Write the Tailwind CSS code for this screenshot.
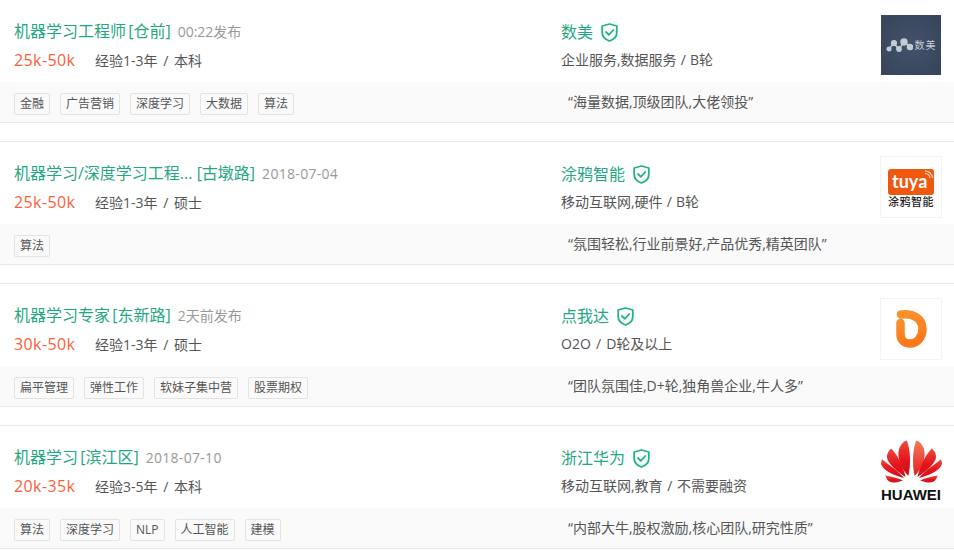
<!DOCTYPE html>
<html><head><meta charset="utf-8"><script src="https://cdn.jsdelivr.net/npm/@tailwindcss/browser@4"></script></head>
<body class="bg-white overflow-hidden">
<div class="w-[954px] h-[550px] overflow-hidden font-['Open_Sans','Noto_Sans_CJK_SC',sans-serif] text-[#555]">
<div class="-mt-px flex flex-col gap-[18px]">

<section class="h-[124px] border-y border-[#e8e8e8] flex flex-col">
 <div class="h-[82px] flex">
  <div class="w-[561px] pl-[14px] pt-[20px]">
   <div class="flex items-center h-[22px] gap-[7px]"><span class="text-[16px] leading-[22px] text-[#1fa883] [word-spacing:-2px]">机器学习工程师 [仓前]</span><span class="text-[14px] text-[#999]">00:22发布</span></div>
   <div class="flex items-center h-[22px] mt-[7px]"><span class="w-[81px] text-[16px] tracking-[0.4px] text-[#fd5f39]">25k-50k</span><span class="text-[14px] mt-[1px] [word-spacing:2px]">经验1-3年 / 本科</span></div>
  </div>
  <div class="w-[320px] pt-[21px]">
   <div class="flex items-center h-[22px] gap-[8px]"><span class="text-[16px] text-[#1fa883]">数美</span>
    <svg class="w-[17px] h-[19px]" viewBox="0 0 17 19" fill="none" stroke="#1fb389" stroke-width="1.8"><path d="M8.5 1 L15.8 3 V9.5 C15.8 14 12 16.8 8.5 18 C5 16.8 1.2 14 1.2 9.5 V3 Z" stroke-linejoin="round"/><path d="M5 9 L7.8 11.8 L12.3 7" stroke-linecap="round" stroke-linejoin="round"/></svg></div>
   <div class="text-[14px] leading-[22px] mt-[6px] [word-spacing:0.5px]">企业服务,数据服务 / B轮</div>
  </div>
  <div class="pt-[15px]"><div class="w-[60px] h-[60px] bg-[radial-gradient(circle,#42526a,#37445a)] flex items-center justify-center gap-[2px]">
   <svg class="w-[27px] h-[16px]" viewBox="0 0 27 16" fill="#c3cbd5" stroke="#c3cbd5" stroke-width="1.4"><path d="M3 12 L8 6 L13 13 L18 4 L24 10" fill="none"/><circle cx="3" cy="12" r="1.8"/><circle cx="8" cy="6" r="2.4"/><circle cx="13" cy="12" r="2.2"/><circle cx="18" cy="5" r="3"/><circle cx="24" cy="10" r="2.6"/></svg>
   <span class="text-[10px] leading-none text-[#c3cbd5] tracking-[1px]">数美</span>
  </div></div>
 </div>
 <div class="flex-1 bg-[#fafafa] flex items-center">
  <div class="w-[568px] pl-[14px] mt-[4px] flex gap-[10px] text-[12px]">
   <span class="h-[22px] leading-[20px] px-[5px] border border-[#e3e3e3] rounded-[2px]">金融</span>
   <span class="h-[22px] leading-[20px] px-[5px] border border-[#e3e3e3] rounded-[2px]">广告营销</span>
   <span class="h-[22px] leading-[20px] px-[5px] border border-[#e3e3e3] rounded-[2px]">深度学习</span>
   <span class="h-[22px] leading-[20px] px-[5px] border border-[#e3e3e3] rounded-[2px]">大数据</span>
   <span class="h-[22px] leading-[20px] px-[5px] border border-[#e3e3e3] rounded-[2px]">算法</span>
  </div>
  <div class="text-[14px] -mt-[2px]">“海量数据,顶级团队,大佬领投”</div>
 </div>
</section>

<section class="h-[124px] border-y border-[#e8e8e8] flex flex-col">
 <div class="h-[82px] flex">
  <div class="w-[561px] pl-[14px] pt-[20px]">
   <div class="flex items-center h-[22px] gap-[7px]"><span class="text-[16px] leading-[22px] text-[#1fa883]">机器学习/深度学习工程... [古墩路]</span><span class="text-[14px] tracking-[0.3px] text-[#999]">2018-07-04</span></div>
   <div class="flex items-center h-[22px] mt-[7px]"><span class="w-[81px] text-[16px] tracking-[0.4px] text-[#fd5f39]">25k-50k</span><span class="text-[14px] mt-[1px] [word-spacing:2px]">经验1-3年 / 硕士</span></div>
  </div>
  <div class="w-[319px] pt-[21px]">
   <div class="flex items-center h-[22px] gap-[8px]"><span class="text-[16px] text-[#1fa883]">涂鸦智能</span>
    <svg class="w-[17px] h-[19px]" viewBox="0 0 17 19" fill="none" stroke="#1fb389" stroke-width="1.8"><path d="M8.5 1 L15.8 3 V9.5 C15.8 14 12 16.8 8.5 18 C5 16.8 1.2 14 1.2 9.5 V3 Z" stroke-linejoin="round"/><path d="M5 9 L7.8 11.8 L12.3 7" stroke-linecap="round" stroke-linejoin="round"/></svg></div>
   <div class="text-[14px] leading-[22px] mt-[6px] [word-spacing:0.5px]">移动互联网,硬件 / B轮</div>
  </div>
  <div class="pt-[14px]"><div class="w-[62px] h-[62px] border border-[#f3f3f3] flex flex-col items-center pt-[12px]">
   <div class="relative w-[46px] h-[26px] bg-[#f0570f] rounded-[3px] flex items-center pl-[4px]"><span class="text-[18px] leading-none font-bold text-white font-['Lato',sans-serif] -mt-[3px]">tuya</span>
    <svg class="absolute right-[1px] top-[1px] w-[9px] h-[9px]" viewBox="0 0 9 9" fill="none" stroke="#ffd9c4" stroke-width="1.2"><path d="M1 3.5 A5 5 0 0 1 6 8"/><path d="M1 0.8 A8 8 0 0 1 8.5 8"/></svg></div>
   <span class="text-[11px] leading-[13px] tracking-[0.5px] font-medium text-[#222]">涂鸦智能</span>
  </div></div>
 </div>
 <div class="flex-1 bg-[#fafafa] flex items-center">
  <div class="w-[568px] pl-[14px] mt-[4px] flex gap-[10px] text-[12px]">
   <span class="h-[22px] leading-[20px] px-[5px] border border-[#e3e3e3] rounded-[2px]">算法</span>
  </div>
  <div class="text-[14px] -mt-[2px]">“氛围轻松,行业前景好,产品优秀,精英团队”</div>
 </div>
</section>

<section class="h-[124px] border-y border-[#e8e8e8] flex flex-col">
 <div class="h-[82px] flex">
  <div class="w-[561px] pl-[14px] pt-[20px]">
   <div class="flex items-center h-[22px] gap-[7px]"><span class="text-[16px] leading-[22px] text-[#1fa883] [word-spacing:-2px]">机器学习专家 [东新路]</span><span class="text-[14px] text-[#999]">2天前发布</span></div>
   <div class="flex items-center h-[22px] mt-[7px]"><span class="w-[81px] text-[16px] tracking-[0.4px] text-[#fd5f39]">30k-50k</span><span class="text-[14px] mt-[1px] [word-spacing:2px]">经验1-3年 / 硕士</span></div>
  </div>
  <div class="w-[319px] pt-[21px]">
   <div class="flex items-center h-[22px] gap-[8px]"><span class="text-[16px] text-[#1fa883]">点我达</span>
    <svg class="w-[17px] h-[19px]" viewBox="0 0 17 19" fill="none" stroke="#1fb389" stroke-width="1.8"><path d="M8.5 1 L15.8 3 V9.5 C15.8 14 12 16.8 8.5 18 C5 16.8 1.2 14 1.2 9.5 V3 Z" stroke-linejoin="round"/><path d="M5 9 L7.8 11.8 L12.3 7" stroke-linecap="round" stroke-linejoin="round"/></svg></div>
   <div class="text-[14px] leading-[22px] mt-[6px] [word-spacing:1.5px]">O2O / D轮及以上</div>
  </div>
  <div class="pt-[14px]"><div class="w-[62px] h-[62px] border border-[#f3f3f3] flex items-center justify-center">
   <svg class="w-[31px] h-[38px]" viewBox="0 0 31 38" fill="none"><defs><linearGradient id="dw" x1="0" y1="0" x2="0.3" y2="1"><stop offset="0" stop-color="#f9922e"/><stop offset="1" stop-color="#fd7a1c"/></linearGradient></defs><path d="M5 4.5 C18 3 26.5 9 26.5 19 C26.5 28 20.5 33.5 14 33.5 C8 33.5 4.5 29.5 4.5 24 V13" stroke="url(#dw)" stroke-width="8.5" stroke-linecap="round"/></svg>
  </div></div>
 </div>
 <div class="flex-1 bg-[#fafafa] flex items-center">
  <div class="w-[568px] pl-[14px] mt-[4px] flex gap-[10px] text-[12px]">
   <span class="h-[22px] leading-[20px] px-[5px] border border-[#e3e3e3] rounded-[2px]">扁平管理</span>
   <span class="h-[22px] leading-[20px] px-[5px] border border-[#e3e3e3] rounded-[2px]">弹性工作</span>
   <span class="h-[22px] leading-[20px] px-[5px] border border-[#e3e3e3] rounded-[2px]">软妹子集中营</span>
   <span class="h-[22px] leading-[20px] px-[5px] border border-[#e3e3e3] rounded-[2px]">股票期权</span>
  </div>
  <div class="text-[14px] -mt-[2px]">“团队氛围佳,D+轮,独角兽企业,牛人多”</div>
 </div>
</section>

<section class="h-[124px] border-y border-[#e8e8e8] flex flex-col">
 <div class="h-[82px] flex">
  <div class="w-[561px] pl-[14px] pt-[20px]">
   <div class="flex items-center h-[22px] gap-[7px]"><span class="text-[16px] leading-[22px] text-[#1fa883] [word-spacing:-2px]">机器学习 [滨江区]</span><span class="text-[14px] tracking-[0.3px] text-[#999]">2018-07-10</span></div>
   <div class="flex items-center h-[22px] mt-[7px]"><span class="w-[81px] text-[16px] tracking-[0.4px] text-[#fd5f39]">20k-35k</span><span class="text-[14px] mt-[1px] [word-spacing:2px]">经验3-5年 / 本科</span></div>
  </div>
  <div class="w-[319px] pt-[21px]">
   <div class="flex items-center h-[22px] gap-[8px]"><span class="text-[16px] text-[#1fa883]">浙江华为</span>
    <svg class="w-[17px] h-[19px]" viewBox="0 0 17 19" fill="none" stroke="#1fb389" stroke-width="1.8"><path d="M8.5 1 L15.8 3 V9.5 C15.8 14 12 16.8 8.5 18 C5 16.8 1.2 14 1.2 9.5 V3 Z" stroke-linejoin="round"/><path d="M5 9 L7.8 11.8 L12.3 7" stroke-linecap="round" stroke-linejoin="round"/></svg></div>
   <div class="text-[14px] leading-[22px] mt-[6px] [word-spacing:1px]">移动互联网,教育 / 不需要融资</div>
  </div>
  <div class="pt-[14px]"><div class="w-[62px] h-[62px] flex flex-col items-center">
   <svg class="w-[61px] h-[47px]" viewBox="1.5 0.5 57 44.5" preserveAspectRatio="none" fill="url(#hw)"><defs><linearGradient id="hw" x1="0" y1="0" x2="0" y2="1"><stop offset="0" stop-color="#f0483c"/><stop offset="0.55" stop-color="#e4141c"/><stop offset="1" stop-color="#d0101a"/></linearGradient><linearGradient id="hw2" x1="0" y1="0" x2="0" y2="1"><stop offset="0" stop-color="#f47a5a"/><stop offset="1" stop-color="#e2201f"/></linearGradient></defs><path d="M27 37 C20 29 16 18 18.5 9 C20 5 22.5 2 25.5 1 C28.5 8 30 24 27 37Z"/><path d="M33 37 C40 29 44 18 41.5 9 C40 5 37.5 2 34.5 1 C31.5 8 30 24 33 37Z" fill="url(#hw2)"/><path d="M24.5 38 C16 32 7 24 7 17 C7.5 13 9 11 11 9 C16 14 22 26 24.5 38Z"/><path d="M35.5 38 C44 32 53 24 53 17 C52.5 13 51 11 49 9 C44 14 38 26 35.5 38Z"/><path d="M23 39 C14 36 5 33 1.5 25 C1.5 23 2 22 2.5 20 C9 26 18 32 23 39Z"/><path d="M37 39 C46 36 55 33 58.5 25 C58.5 23 58 22 57.5 20 C51 26 42 32 37 39Z"/><path d="M22 41.5 C15 44 10 45 7 40 L5.5 36.5 C11 37.5 17 39 22 41.5Z"/><path d="M38 41.5 C45 44 50 45 53 40 L54.5 36.5 C49 37.5 43 39 38 41.5Z"/></svg>
   <span class="text-[15px] leading-[15px] mt-[3px] font-bold text-[#111] font-['Liberation_Sans',sans-serif]">HUAWEI</span>
  </div></div>
 </div>
 <div class="flex-1 bg-[#fafafa] flex items-center">
  <div class="w-[568px] pl-[14px] mt-[4px] flex gap-[10px] text-[12px]">
   <span class="h-[22px] leading-[20px] px-[5px] border border-[#e3e3e3] rounded-[2px]">算法</span>
   <span class="h-[22px] leading-[20px] px-[5px] border border-[#e3e3e3] rounded-[2px]">深度学习</span>
   <span class="h-[22px] leading-[20px] px-[5px] border border-[#e3e3e3] rounded-[2px]">NLP</span>
   <span class="h-[22px] leading-[20px] px-[5px] border border-[#e3e3e3] rounded-[2px]">人工智能</span>
   <span class="h-[22px] leading-[20px] px-[5px] border border-[#e3e3e3] rounded-[2px]">建模</span>
  </div>
  <div class="text-[14px] -mt-[2px]">“内部大牛,股权激励,核心团队,研究性质”</div>
 </div>
</section>
</div></div>
</body></html>
